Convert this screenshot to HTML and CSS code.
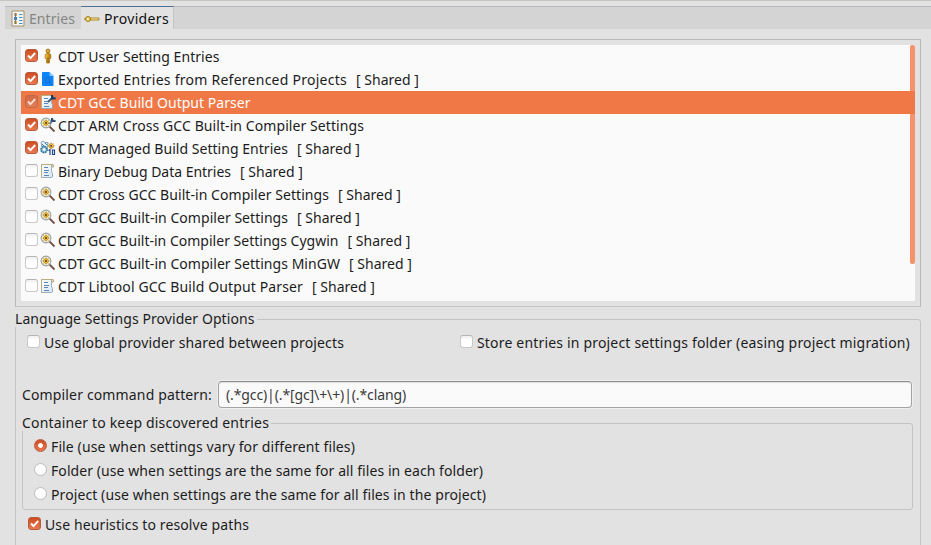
FILE: index.html
```html
<!DOCTYPE html>
<html lang="en">
<head>
<meta charset="utf-8">
<title>Providers</title>
<link rel="stylesheet" href="styles.css">
<script src="fit.js" defer></script>
</head>
<body>
<svg class="defs" width="0" height="0">
  <defs>
    <linearGradient id="gold" x1="0" x2="1"><stop offset="0" stop-color="#f5c83c"/><stop offset="1" stop-color="#a86c08"/></linearGradient>
    <linearGradient id="paper" x1="0" x2="1" y2="1"><stop offset="0" stop-color="#fff"/><stop offset="1" stop-color="#d3e5f7"/></linearGradient>
    <g id="gear"><path d="M6 2.700v6.600M2.700 6h6.600M3.700 3.700l4.600 4.600M8.300 3.700l-4.600 4.600" stroke="#8a5a1c" stroke-width="1"/><circle cx="6" cy="6" r="2.300" fill="#f9cf45" stroke="#c8922a" stroke-width=".9"/><circle cx="6" cy="6" r="1" fill="#4d3014"/></g>
    <symbol id="user" viewBox="0 0 16 16"><path d="M6.500 5.500h3l1.300 1v4h-1.300V15h-3v-4.500H5.200v-4z" fill="url(#gold)" stroke="#b07c12" stroke-width=".8"/><circle cx="8" cy="3" r="1.900" fill="#e6b02e" stroke="#8b5b09" stroke-width=".8"/><path d="M8 9.500v5.500" stroke="#714b0b" stroke-width=".8"/></symbol>
    <symbol id="export" viewBox="0 0 16 16"><path d="M3 1h6.500l4 4v9q0 1-1 1H3q-1 0-1-1V2q0-1 1-1z" fill="#0a84fb"/><path d="M9.500 1v4h4z" fill="#8cc8ff"/><circle cx="7.500" cy="9" r="2.600" fill="none" stroke="#2b6cb8"/><path d="M9.500 11l2.500 2.500" stroke="#2b6cb8"/></symbol>
    <symbol id="doc" viewBox="0 0 16 16"><path d="M1.500 1.500h11.500q-1.500 1-1.500 3v3q0 1.500 1 3v2.500q0 1.500-1 1.500h-10z" fill="url(#paper)" stroke="#8fa6b4" stroke-width=".9"/><path d="M1.500 14.500V1.500h11" fill="none" stroke="#b9ae82"/><path d="M11.500 4V2.500q.5-1 1.500-1t.5 2.500z" fill="#efe0ae" stroke="#a69c70" stroke-width=".8"/><path d="M4 4.500h4M4 7.500h5M4 9.500h4M4 12.500h5" stroke="#5d86b8"/></symbol>
    <symbol id="wrench" viewBox="0 0 16 16"><path d="M8 8l4-4" stroke="#3b5878" stroke-width="1.800"/><path d="M11 1v3.500q0 1 1 1h3.500l.3-2-2.300-.2-.5-2.300z" fill="#1d3a5f"/></symbol>
    <symbol id="lens" viewBox="0 0 16 16"><path d="M9.500 9.500l5 5" stroke="#775346" stroke-width="1.800"/><circle cx="6" cy="6" r="4.900" fill="#f6f1cf" stroke="#96a0a4" stroke-width="1.100"/><use href="#gear"/></symbol>
    <symbol id="arm" viewBox="0 0 16 16"><use href="#lens"/><path d="M9.500 7l3-3" stroke="#5a6f86" stroke-width="1.600"/><path d="M11 1v3q0 1 1 1h3.500l.3-1.700-2.300-.2-.5-2.100z" fill="#2c4d75"/></symbol>
    <symbol id="managed" viewBox="0 0 16 16"><path d="M1 2.500l2-1.500 2 1.500h3l-1 6-5-1z" fill="#e4eef4" stroke="#6a90a8" stroke-width=".8"/><g transform="translate(-1 4.500) scale(.85)"><circle cx="6" cy="6" r="4.200" fill="#8fbdd3"/><circle cx="6" cy="6" r="3.600" fill="none" stroke="#276c91" stroke-width="1.800" stroke-dasharray="1.700 1.100"/><circle cx="6" cy="6" r="1.500" fill="#fff"/></g><g transform="translate(5.500 .2) scale(.95)"><use href="#gear"/></g><path d="M2 4l3 3M5 3l2 2" stroke="#3b86a8"/><path d="M8.500 10.500l1.500-1v5.500M12.500 10h2v4.500h-2z" stroke="#254a8c" stroke-width="1.200" fill="none"/></symbol>
    <symbol id="key" viewBox="0 0 16 16"><path d="M6 7h9v2H6z" fill="#ffe9a8" stroke="#a57b13" stroke-width=".9"/><ellipse cx="4" cy="8" rx="2.500" ry="2.500" fill="#efcb5e" stroke="#a57b13"/><circle cx="3.800" cy="8" r=".9" fill="#fff8df"/><path d="M0 8h1.500" stroke="#a57b13"/></symbol>
    <symbol id="entries" viewBox="0 0 14 17"><path d="M1 1h12v15H1z" fill="#f2f6f9" stroke="#a99164"/><path d="M3 3h3v3H3z" fill="#d9a35c"/><path d="M3 7h3v3H3z" fill="#397bb6"/><path d="M3 11h3v3H3z" fill="#d7a63c"/><path d="M4.500 3v11" stroke="#6a7e91"/><path d="M8 4.500h3.500M8 7.500h3.500M8 10.500h3.500M8 13.500h3.500" stroke="#4a90c4" stroke-width="1.200"/></symbol>
    <symbol id="tick" viewBox="0 0 13 13"><path d="M3 6.500l2.500 2.700 4.700-5.200" fill="none" stroke="#fff" stroke-width="1.900"/></symbol>
  </defs>
</svg>
<div class="tabs">
  <div class="tab muted"><svg class="entries-icon"><use href="#entries"/></svg><span data-width="46">Entries</span></div>
  <div class="tab active"><svg class="icon"><use href="#key"/></svg><span data-width="65">Providers</span></div>
</div>
<div class="frame">
  <div class="list">
    <div class="row"><i class="check on"><svg><use href="#tick"/></svg></i><svg class="icon"><use href="#user"/></svg><span data-width="161.5">CDT User Setting Entries</span></div>
    <div class="row"><i class="check on"><svg><use href="#tick"/></svg></i><svg class="icon"><use href="#export"/></svg><span data-width="289">Exported Entries from Referenced Projects</span><span class="shared" data-width="63">[ Shared ]</span></div>
    <div class="row selected"><i class="check on"><svg><use href="#tick"/></svg></i><svg class="icon"><use href="#doc"/><use href="#wrench"/></svg><span data-width="192.5">CDT GCC Build Output Parser</span></div>
    <div class="row"><i class="check on"><svg><use href="#tick"/></svg></i><svg class="icon"><use href="#arm"/></svg><span data-width="306">CDT ARM Cross GCC Built-in Compiler Settings</span></div>
    <div class="row"><i class="check on"><svg><use href="#tick"/></svg></i><svg class="icon"><use href="#managed"/></svg><span data-width="230">CDT Managed Build Setting Entries</span><span class="shared" data-width="63">[ Shared ]</span></div>
    <div class="row"><i class="check"></i><svg class="icon"><use href="#doc"/></svg><span data-width="173">Binary Debug Data Entries</span><span class="shared" data-width="63">[ Shared ]</span></div>
    <div class="row"><i class="check"></i><svg class="icon"><use href="#lens"/></svg><span data-width="271">CDT Cross GCC Built-in Compiler Settings</span><span class="shared" data-width="63">[ Shared ]</span></div>
    <div class="row"><i class="check"></i><svg class="icon"><use href="#lens"/></svg><span data-width="230">CDT GCC Built-in Compiler Settings</span><span class="shared" data-width="63">[ Shared ]</span></div>
    <div class="row"><i class="check"></i><svg class="icon"><use href="#lens"/></svg><span data-width="280.5">CDT GCC Built-in Compiler Settings Cygwin</span><span class="shared" data-width="63">[ Shared ]</span></div>
    <div class="row"><i class="check"></i><svg class="icon"><use href="#lens"/></svg><span data-width="282">CDT GCC Built-in Compiler Settings MinGW</span><span class="shared" data-width="63">[ Shared ]</span></div>
    <div class="row"><i class="check"></i><svg class="icon"><use href="#doc"/></svg><span data-width="245">CDT Libtool GCC Build Output Parser</span><span class="shared" data-width="63">[ Shared ]</span></div>
    <div class="scrollbar"></div>
  </div>
</div>
<fieldset class="options">
  <legend><span data-width="239.5">Language Settings Provider Options</span></legend>
  <div class="toggles">
    <div class="field"><i class="check"></i><span data-width="300">Use global provider shared between projects</span></div>
    <div class="field"><i class="check"></i><span data-width="433">Store entries in project settings folder (easing project migration)</span></div>
  </div>
  <div class="command"><span data-width="190">Compiler command pattern:</span><div class="input"><span data-width="180">(.*gcc)|(.*[gc]\+\+)|(.*clang)</span></div></div>
  <fieldset class="container">
    <legend><span data-width="247">Container to keep discovered entries</span></legend>
    <div class="field"><i class="radio on"></i><span data-width="304">File (use when settings vary for different files)</span></div>
    <div class="field"><i class="radio"></i><span data-width="432">Folder (use when settings are the same for all files in each folder)</span></div>
    <div class="field"><i class="radio"></i><span data-width="435">Project (use when settings are the same for all files in the project)</span></div>
  </fieldset>
  <div class="field heuristics"><i class="check on"><svg><use href="#tick"/></svg></i><span data-width="204">Use heuristics to resolve paths</span></div>
</fieldset>
</body>
</html>
```
FILE: styles.css
```css
* { box-sizing: border-box; }
body { margin: 0; width: 931px; height: 545px; overflow: hidden; border-top: 1px solid #c9c5c1; background: #e2e2e2; color: #1c1c1c; font: 14px/23px "Noto Sans", sans-serif; white-space: nowrap; }
.defs { display: block; position: absolute; }
span { flex: none; white-space: pre; }
.tabs { display: flex; height: 23px; margin: 5px 0 0 5px; border-top: 1px solid #b8b8b8; background: #d4d4d4; }
.tab { display: flex; align-items: center; height: 23px; margin-top: -1px; padding-top: 2px; }
.muted { width: 76px; padding-left: 6px; gap: 4px; color: #858585; }
.active { width: 93px; padding-left: 3px; gap: 4px; border-top: 1px solid #4c7092; border-right: 1px solid #c4c4c4; background: #e2e2e2; color: #111; padding-top: 1px; }
.icon { flex: none; width: 16px; height: 16px; }
.entries-icon { width: 14px; height: 17px; }
.frame { height: 268px; width: 906px; margin: 10px 0 0 15px; padding: 5px; border: 1px solid #b9b8b7; border-bottom-color: #c8c6c4; }
.list { position: relative; height: 256px; background: #fafafa; overflow: hidden; }
.row { display: flex; align-items: center; height: 23px; padding-left: 3.500px; }
.row .icon { margin: -1px 2px 0 2.500px; }
.row .check { margin-top: -2px; }
.shared { margin-left: 9px; }
.selected { position: relative; z-index: 1; background: #f07746; color: #fff; }
.selected .check { opacity: .75; border-color: #a9674a; background: linear-gradient(#c76542, #dd8059); }
.scrollbar { position: absolute; right: 0; top: 0; width: 5px; height: 219px; background: #f4936c; border-radius: 2px; }
.check { flex: none; width: 13px; height: 13px; border: 1px solid #c9c9c9; border-top-color: #b5b5b5; border-radius: 3px; background: linear-gradient(#f0f0f0, #fff 40%); }
.check.on { border-color: #b85b3a; background: linear-gradient(#cf4c23, #e77950); }
.selected .check.on { border-color: #a9674a; background: linear-gradient(#c76542, #dd8059); }
.check svg { display: block; width: 13px; height: 13px; margin: -1px; }
fieldset { min-width: 0; margin: 0; padding: 0; border: 1px solid #c5c3c1; border-radius: 3px; }
legend { margin-left: -1px; padding: 0 2px 0 0; background: #e2e2e2; height: 16px; line-height: 16px; }
legend span { display: inline-block; }
.options { width: 906px; height: 250px; margin: 4px 0 0 15px; }
.toggles { display: grid; grid-template-columns: 433px 1fr; margin-top: 3px; padding-left: 10.500px; }
.field { display: flex; align-items: center; height: 24px; gap: 4.500px; }
.field i { margin-top: -1px; }
.command { display: flex; align-items: center; height: 27px; margin: 27px 8px 0 6px; gap: 6px; }
.input { display: flex; align-items: center; flex: 1; height: 27px; padding-left: 7px; border: 1px solid #a2a2a2; border-top-color: #8d8d8d; border-radius: 4px; background: #fafafa; box-shadow: 0 0 0 1px #efefef, inset 0 1px 1px #dedede; color: #3a3a3a; }
.container { width: 891px; height: 95px; margin: 7px 0 0 6px; }
.container .field { padding-left: 10.500px; gap: 4.500px; }
.container legend + .field { margin-top: 3px; }
.radio { flex: none; width: 13px; height: 13px; border: 1px solid #bcbcbc; border-radius: 50%; background: #fdfdfd; }
.radio.on { border-color: #b85b3a; background: radial-gradient(circle, #fff 0 2px, transparent 2.8px), linear-gradient(#cf4c23, #e77950); }
.heuristics { margin: 2px 0 0 11.500px; }
```
FILE: fit.js
```js
// Spread each label's letters over the width reserved for it.
document.fonts.ready.then(() => {
  document.querySelectorAll("[data-width]").forEach((label) => {
    const target = Number(label.dataset.width);
    const natural = label.getBoundingClientRect().width;
    label.style.letterSpacing = (target - natural) / label.textContent.length + "px";
  });
});
```
